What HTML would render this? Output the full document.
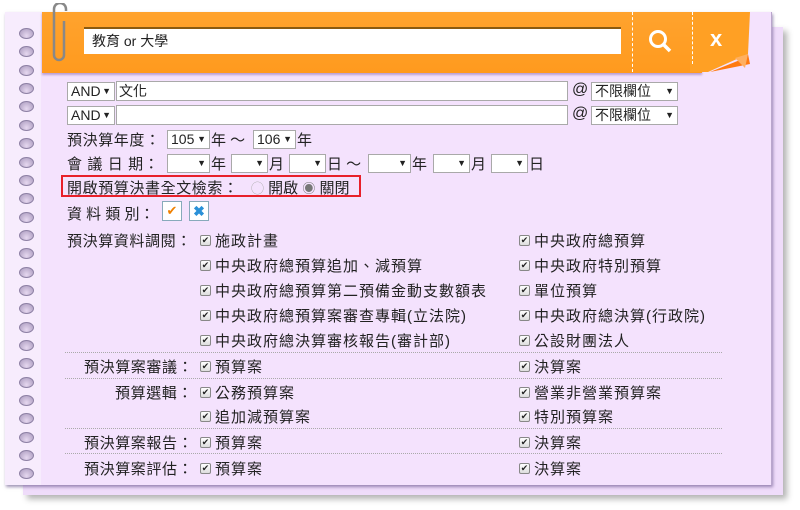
<!DOCTYPE html>
<html><head><meta charset="utf-8"><style>
*{margin:0;padding:0;box-sizing:border-box}
body{width:800px;height:510px;background:#fff;position:relative;overflow:hidden;font-family:"Liberation Sans","Noto Sans CJK TC",sans-serif;font-size:15px;color:#222}
.a{position:absolute;white-space:nowrap}
.back{left:23px;top:27px;width:760px;height:468px;background:#efdcfa;box-shadow:4px 4px 6px rgba(0,0,0,.3)}
.front{left:5px;top:12px;width:767px;height:473px;background:#f4e2fd;box-shadow:1px 2px 3px rgba(80,60,120,.55);border-right:1px solid #b9a6cc}
.strip{left:5px;top:12px;width:36px;height:473px;background:#f7ecfd}
.hole{position:absolute;left:19px;width:15px;height:11px;border-radius:50%;background:radial-gradient(ellipse at 50% 75%,#e6d8f0,#a898bc);border:1px solid #8d80a4}
.hdr{left:42px;top:12px;width:660px;height:61px;background:linear-gradient(#ffa32e,#ff9a1e);box-shadow:0 2px 2px rgba(100,60,150,.4)}
.sel{position:absolute;height:19px;background:#fff;border:1px solid #a9a9a9;font-size:13px;line-height:17px;padding-left:3px;white-space:nowrap}
.sel:after{content:"▼";position:absolute;right:3px;top:0;font-size:9px}
.inp{position:absolute;height:20px;background:#fff;border:1px solid #a9a9a9;font-size:14px;line-height:18px;padding-left:2px}
.cb{display:inline-block;width:11px;height:11px;border:1px solid #888;border-radius:2px;background:linear-gradient(#fff,#ddd);font-size:9px;line-height:9px;text-align:center;vertical-align:middle;position:relative;top:-2px;margin-right:4px;letter-spacing:0}
.row{position:absolute;white-space:nowrap;letter-spacing:.6px}
.it{position:absolute;white-space:nowrap;letter-spacing:1px}
.dl{position:absolute;left:65px;width:657px;border-top:1px dotted #aaa}
</style></head><body>
<div class="a back"></div>
<div class="a front"></div>
<div class="a strip"></div>
<div class="hole" style="top:28px"></div><div class="hole" style="top:46px"></div><div class="hole" style="top:65px"></div><div class="hole" style="top:83px"></div><div class="hole" style="top:101px"></div><div class="hole" style="top:120px"></div><div class="hole" style="top:138px"></div><div class="hole" style="top:157px"></div><div class="hole" style="top:175px"></div><div class="hole" style="top:193px"></div><div class="hole" style="top:212px"></div><div class="hole" style="top:230px"></div><div class="hole" style="top:248px"></div><div class="hole" style="top:267px"></div><div class="hole" style="top:285px"></div><div class="hole" style="top:303px"></div><div class="hole" style="top:322px"></div><div class="hole" style="top:340px"></div><div class="hole" style="top:358px"></div><div class="hole" style="top:377px"></div><div class="hole" style="top:395px"></div><div class="hole" style="top:413px"></div><div class="hole" style="top:432px"></div><div class="hole" style="top:450px"></div><div class="hole" style="top:468px"></div>
<div class="a hdr"></div>
<svg class="a" style="left:690px;top:12px" width="70" height="62"><path d="M0 0H60L58 42L18 60H0Z" fill="#ffa024"/><path d="M58 42L50 48L20 60L60 52Z" fill="#ff7a10"/><path d="M45 46L58 42L55 56Z" fill="#ffb060"/></svg>
<div class="a" style="left:632px;top:12px;height:60px;border-left:1px dashed #fff"></div>
<div class="a" style="left:692px;top:12px;height:52px;border-left:1px dashed #fff"></div>
<div class="a" style="left:84px;top:27px;width:537px;height:27px;background:#fff;border-top:2px solid #8a5a10;font-size:14px;line-height:25px;padding-left:8px">教育 or 大學</div>
<svg class="a" style="left:646px;top:28px" width="34" height="26"><circle cx="12" cy="11" r="7.5" fill="none" stroke="#fff" stroke-width="3"/><path d="M17 16L24 23" stroke="#fff" stroke-width="3.5"/></svg>
<div class="a" style="left:710px;top:26px;color:#fff;font-weight:bold;font-size:22px">x</div>
<svg class="a" style="left:48px;top:3px" width="24" height="62"><path d="M18 8V6a6 6 0 0 0-12 0V52a5 5 0 0 0 10 0V18" fill="none" stroke="#888" stroke-width="2.5"/></svg>

<div class="sel" style="left:67px;top:82px;width:48px;font-size:14px">AND</div>
<div class="inp" style="left:116px;top:81px;width:452px">文化</div>
<div class="a" style="left:572px;top:81px;font-size:16px">@</div>
<div class="sel" style="left:591px;top:82px;width:87px;font-size:14px">不限欄位</div>
<div class="sel" style="left:67px;top:106px;width:48px;font-size:14px">AND</div>
<div class="inp" style="left:116px;top:105px;width:452px"></div>
<div class="a" style="left:572px;top:105px;font-size:16px">@</div>
<div class="sel" style="left:591px;top:106px;width:87px;font-size:14px">不限欄位</div>

<div class="row" style="left:67px;top:129px">預決算年度：</div>
<div class="sel" style="left:167px;top:130px;width:43px;font-size:14px">105</div><div class="a" style="left:211px;top:129px">年 ～</div>
<div class="sel" style="left:253px;top:130px;width:43px;font-size:14px">106</div><div class="a" style="left:297px;top:129px">年</div>
<div class="row" style="left:67px;top:153px">會 議 日 期：</div>
<div class="sel" style="left:167px;top:154px;width:43px"></div><div class="a" style="left:211px;top:153px">年</div>
<div class="sel" style="left:231px;top:154px;width:37px"></div><div class="a" style="left:269px;top:153px">月</div>
<div class="sel" style="left:289px;top:154px;width:37px"></div><div class="a" style="left:327px;top:153px">日 ～</div>
<div class="sel" style="left:368px;top:154px;width:43px"></div><div class="a" style="left:412px;top:153px">年</div>
<div class="sel" style="left:433px;top:154px;width:37px"></div><div class="a" style="left:471px;top:153px">月</div>
<div class="sel" style="left:491px;top:154px;width:37px"></div><div class="a" style="left:529px;top:153px">日</div>
<div class="a" style="left:61px;top:175px;width:300px;height:22px;border:2px solid #e8202a"></div>
<div class="row" style="left:67px;top:177px">開啟預算決書全文檢索：</div>
<div class="a" style="left:251px;top:177px"><span style="color:#aaa;font-size:13px">◯</span> 開啟 <span style="color:#777;font-size:13px">◉</span> 關閉</div>
<div class="row" style="left:67px;top:203px;letter-spacing:0">資 料 類 別：</div>
<div class="a" style="left:162px;top:201px;width:20px;height:20px;border:1px solid #8ab;background:#fff;color:#f08000;text-align:center;line-height:18px;font-size:13px">✔</div>
<div class="a" style="left:189px;top:201px;width:20px;height:20px;border:1px solid #8ab;background:#fff;color:#2a90d8;text-align:center;line-height:18px;font-size:14px;font-weight:bold">✖</div>

<div class="row" style="left:67px;top:230px">預決算資料調閱：</div>
<div class="it" style="left:200px;top:230px"><span class="cb">✔</span>施政計畫</div>
<div class="it" style="left:519px;top:230px"><span class="cb">✔</span>中央政府總預算</div>
<div class="it" style="left:200px;top:255px"><span class="cb">✔</span>中央政府總預算追加、減預算</div>
<div class="it" style="left:519px;top:255px"><span class="cb">✔</span>中央政府特別預算</div>
<div class="it" style="left:200px;top:280px"><span class="cb">✔</span>中央政府總預算第二預備金動支數額表</div>
<div class="it" style="left:519px;top:280px"><span class="cb">✔</span>單位預算</div>
<div class="it" style="left:200px;top:305px"><span class="cb">✔</span>中央政府總預算案審查專輯(立法院)</div>
<div class="it" style="left:519px;top:305px"><span class="cb">✔</span>中央政府總決算(行政院)</div>
<div class="it" style="left:200px;top:330px"><span class="cb">✔</span>中央政府總決算審核報告(審計部)</div>
<div class="it" style="left:519px;top:330px"><span class="cb">✔</span>公設財團法人</div>
<div class="dl" style="top:352px"></div>
<div class="row" style="left:84px;top:356px">預決算案審議：</div>
<div class="it" style="left:200px;top:356px"><span class="cb">✔</span>預算案</div>
<div class="it" style="left:519px;top:356px"><span class="cb">✔</span>決算案</div>
<div class="dl" style="top:378px"></div>
<div class="row" style="left:115px;top:382px">預算選輯：</div>
<div class="it" style="left:200px;top:382px"><span class="cb">✔</span>公務預算案</div>
<div class="it" style="left:519px;top:382px"><span class="cb">✔</span>營業非營業預算案</div>
<div class="it" style="left:200px;top:406px"><span class="cb">✔</span>追加減預算案</div>
<div class="it" style="left:519px;top:406px"><span class="cb">✔</span>特別預算案</div>
<div class="dl" style="top:428px"></div>
<div class="row" style="left:84px;top:432px">預決算案報告：</div>
<div class="it" style="left:200px;top:432px"><span class="cb">✔</span>預算案</div>
<div class="it" style="left:519px;top:432px"><span class="cb">✔</span>決算案</div>
<div class="dl" style="top:453px"></div>
<div class="row" style="left:84px;top:458px">預決算案評估：</div>
<div class="it" style="left:200px;top:458px"><span class="cb">✔</span>預算案</div>
<div class="it" style="left:519px;top:458px"><span class="cb">✔</span>決算案</div>
</body></html>
